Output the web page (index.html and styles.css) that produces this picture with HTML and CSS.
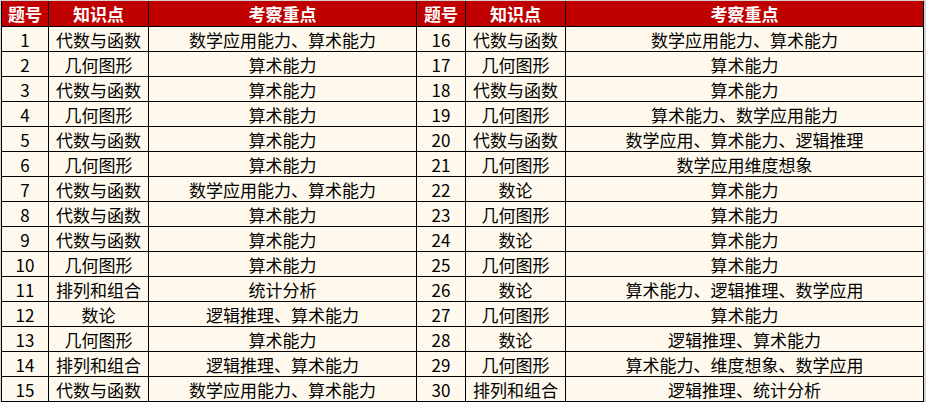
FILE: index.html
```html
<!DOCTYPE html>
<html lang="zh">
<head>
<meta charset="utf-8">
<title>考察重点</title>
<link rel="stylesheet" href="styles.css">
</head>
<body>
<div class="sheet">
  <div class="h">题号</div><div class="h">知识点</div><div class="h">考察重点</div><div class="h">题号</div><div class="h">知识点</div><div class="h">考察重点</div>
  <div class="c">1</div><div class="c">代数与函数</div><div class="c">数学应用能力、算术能力</div><div class="c">16</div><div class="c">代数与函数</div><div class="c">数学应用能力、算术能力</div>
  <div class="c">2</div><div class="c">几何图形</div><div class="c">算术能力</div><div class="c">17</div><div class="c">几何图形</div><div class="c">算术能力</div>
  <div class="c">3</div><div class="c">代数与函数</div><div class="c">算术能力</div><div class="c">18</div><div class="c">代数与函数</div><div class="c">算术能力</div>
  <div class="c">4</div><div class="c">几何图形</div><div class="c">算术能力</div><div class="c">19</div><div class="c">几何图形</div><div class="c">算术能力、数学应用能力</div>
  <div class="c">5</div><div class="c">代数与函数</div><div class="c">算术能力</div><div class="c">20</div><div class="c">代数与函数</div><div class="c">数学应用、算术能力、逻辑推理</div>
  <div class="c">6</div><div class="c">几何图形</div><div class="c">算术能力</div><div class="c">21</div><div class="c">几何图形</div><div class="c">数学应用维度想象</div>
  <div class="c">7</div><div class="c">代数与函数</div><div class="c">数学应用能力、算术能力</div><div class="c">22</div><div class="c">数论</div><div class="c">算术能力</div>
  <div class="c">8</div><div class="c">代数与函数</div><div class="c">算术能力</div><div class="c">23</div><div class="c">几何图形</div><div class="c">算术能力</div>
  <div class="c">9</div><div class="c">代数与函数</div><div class="c">算术能力</div><div class="c">24</div><div class="c">数论</div><div class="c">算术能力</div>
  <div class="c">10</div><div class="c">几何图形</div><div class="c">算术能力</div><div class="c">25</div><div class="c">几何图形</div><div class="c">算术能力</div>
  <div class="c">11</div><div class="c">排列和组合</div><div class="c">统计分析</div><div class="c">26</div><div class="c">数论</div><div class="c">算术能力、逻辑推理、数学应用</div>
  <div class="c">12</div><div class="c">数论</div><div class="c">逻辑推理、算术能力</div><div class="c">27</div><div class="c">几何图形</div><div class="c">算术能力</div>
  <div class="c">13</div><div class="c">几何图形</div><div class="c">算术能力</div><div class="c">28</div><div class="c">数论</div><div class="c">逻辑推理、算术能力</div>
  <div class="c">14</div><div class="c">排列和组合</div><div class="c">逻辑推理、算术能力</div><div class="c">29</div><div class="c">几何图形</div><div class="c">算术能力、维度想象、数学应用</div>
  <div class="c">15</div><div class="c">代数与函数</div><div class="c">数学应用能力、算术能力</div><div class="c">30</div><div class="c">排列和组合</div><div class="c">逻辑推理、统计分析</div>
</div>
</body>
</html>
```
FILE: styles.css
```css
html, body {
  margin: 0;
  padding: 0;
}
body {
  background: #d4d4d4;
  padding: 1px 0 0 1px;
  width: 926px;
  height: 402px;
  box-sizing: border-box;
  overflow: hidden;
  font-family: "Noto Sans CJK SC", "Noto Sans", sans-serif;
}
.sheet {
  display: grid;
  grid-template-columns: 46px 99px 267px 48px 99px 357px;
  grid-template-rows: 25px repeat(15, 24px);
  gap: 1px;
  padding: 0 1px 1px 1px;
  background: #000;
  width: max-content;
}
.h, .c {
  display: flex;
  align-items: center;
  justify-content: center;
  font-size: 17px;
  white-space: nowrap;
  overflow: hidden;
}
.h {
  background: #c00000;
  color: #fff;
  font-weight: bold;
}
.c {
  background: #fef9ec;
  color: #000;
}
```
